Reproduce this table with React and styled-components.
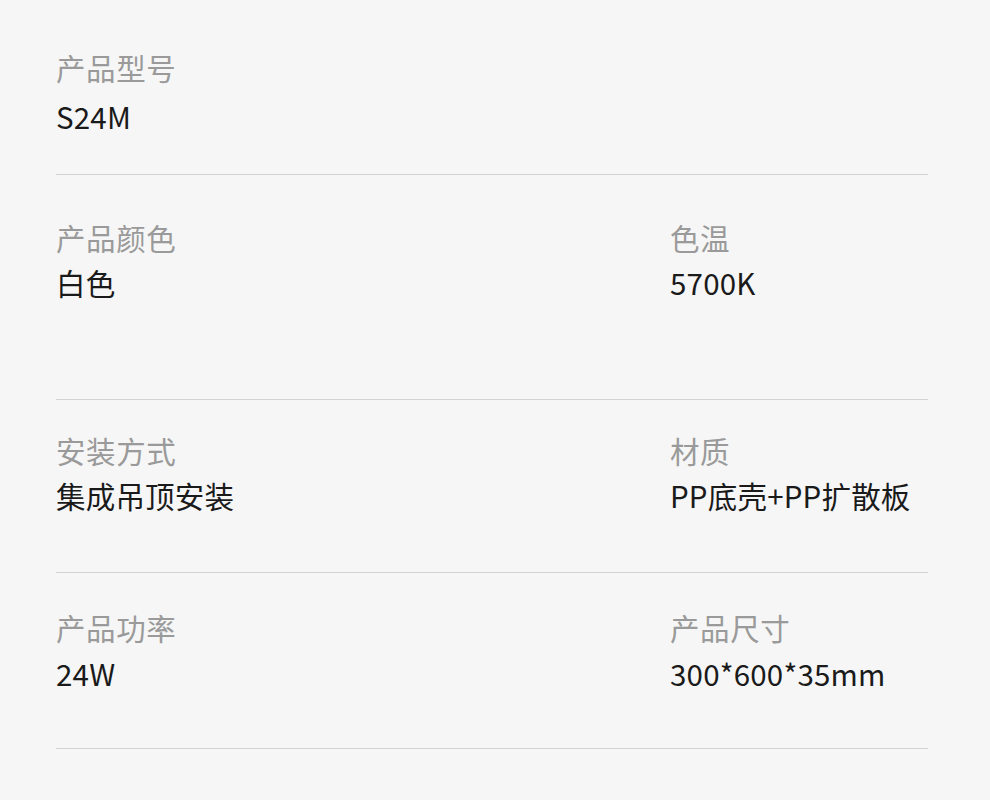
import React from "react";
import styled, { createGlobalStyle } from "styled-components";

const GlobalStyle = createGlobalStyle`
  html, body {
    margin: 0;
    padding: 0;
    background: #f6f6f6;
  }
  body {
    font-family: "Noto Sans CJK SC", "Noto Sans", sans-serif;
  }
`;

const Page = styled.div`
  width: 990px;
  height: 800px;
  background: #f6f6f6;
  overflow: hidden;
`;

const Section = styled.section`
  display: grid;
  grid-template-columns: 614px 1fr;
  margin: 0 62px 0 56px;
  padding: ${(p) => p.$pt}px 0 ${(p) => p.$pb}px;
  border-bottom: 1.5px solid #d2d2d2;
`;

const Cell = styled.div`
  display: flex;
  flex-direction: column;
  gap: ${(p) => p.$gap}px;
`;

const Label = styled.div`
  font-size: 29.5px;
  line-height: 34px;
  color: #9a9a9a;
  letter-spacing: 0.6px;
`;

const Value = styled.div`
  font-size: 29.5px;
  line-height: 34px;
  color: #1a1a1a;
  letter-spacing: 0.2px;
`;

const rows = [
  { pt: 50, pb: 41, gap: 15, items: [{ label: "产品型号", value: "S24M" }] },
  {
    pt: 45,
    pb: 100,
    gap: 11,
    items: [
      { label: "产品颜色", value: "白色" },
      { label: "色温", value: "5700K" },
    ],
  },
  {
    pt: 33,
    pb: 60,
    gap: 11,
    items: [
      { label: "安装方式", value: "集成吊顶安装" },
      { label: "材质", value: "PP底壳+PP扩散板" },
    ],
  },
  {
    pt: 37,
    pb: 58,
    gap: 12,
    items: [
      { label: "产品功率", value: "24W" },
      { label: "产品尺寸", value: "300*600*35mm" },
    ],
  },
];

export default function App() {
  return (
    <Page>
      <GlobalStyle />
      {rows.map((row, i) => (
        <Section key={i} $pt={row.pt} $pb={row.pb}>
          {row.items.map((it) => (
            <Cell key={it.label} $gap={row.gap}>
              <Label>{it.label}</Label>
              <Value>{it.value}</Value>
            </Cell>
          ))}
        </Section>
      ))}
    </Page>
  );
}
